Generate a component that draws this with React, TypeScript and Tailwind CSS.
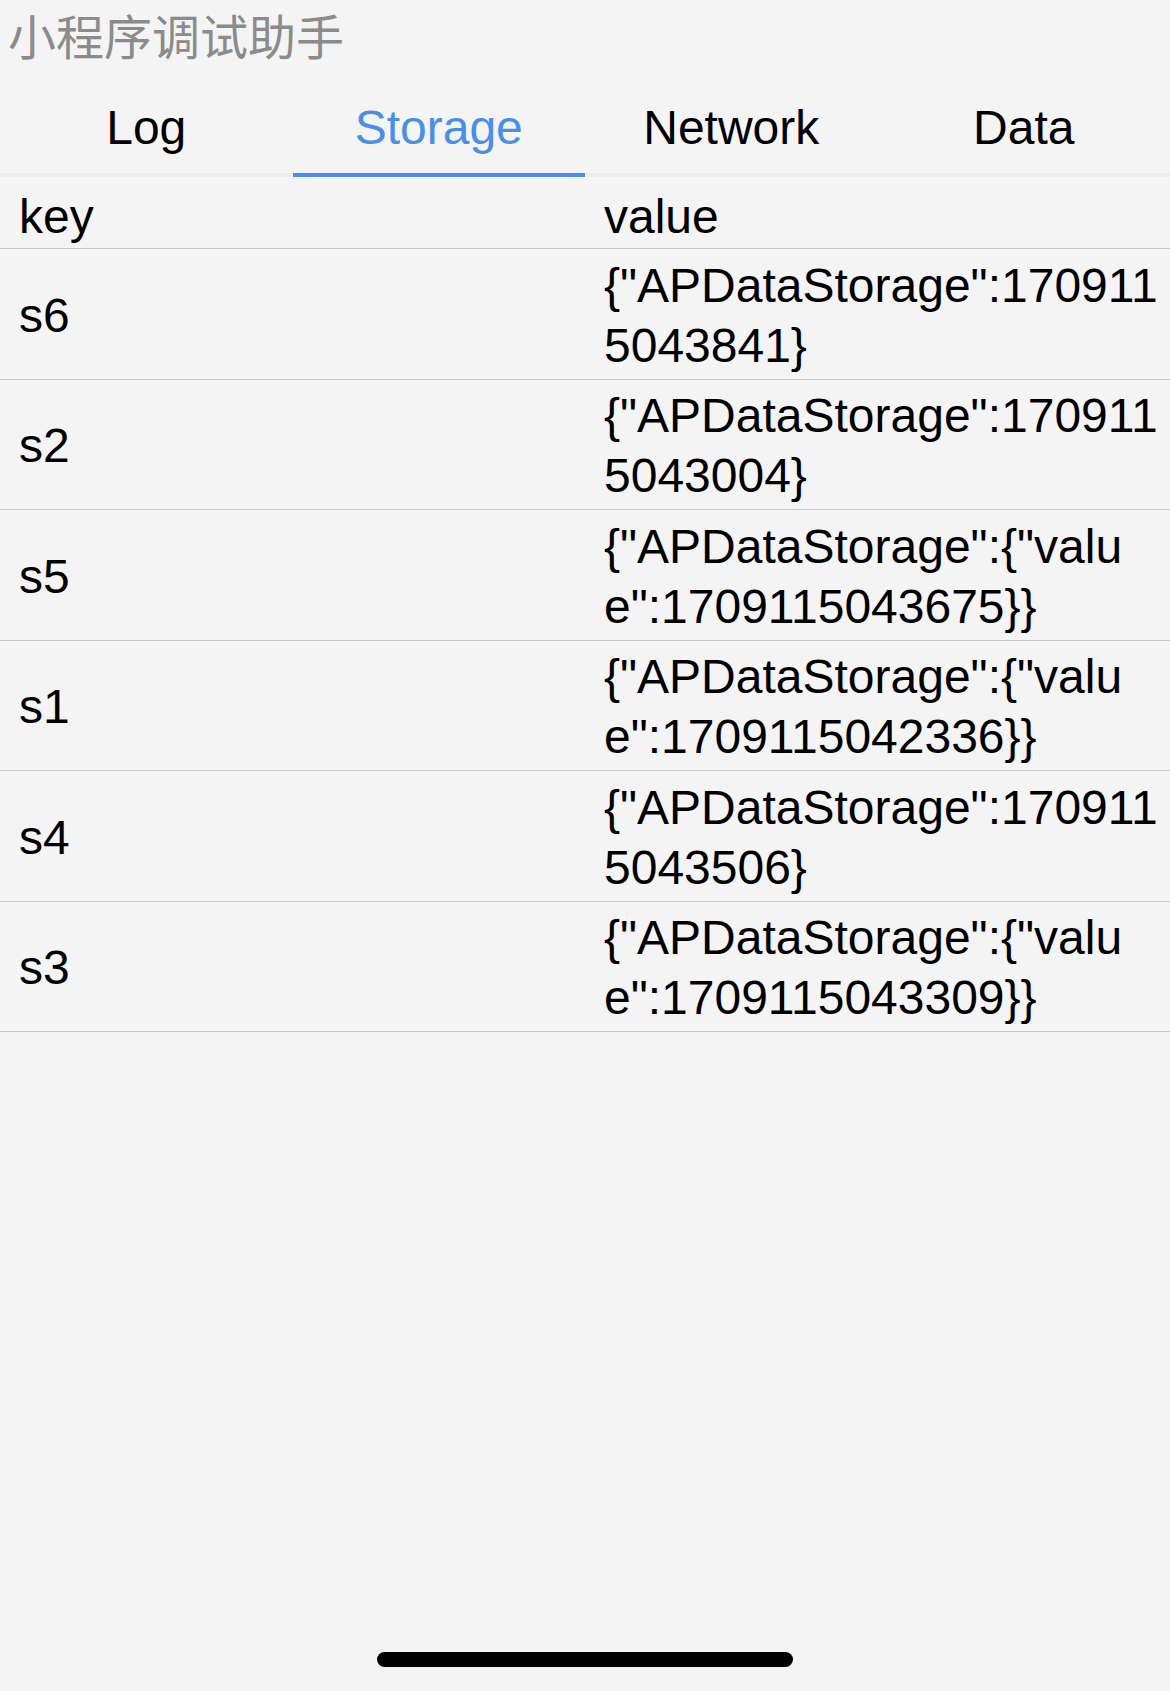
const tabs = ["Log", "Storage", "Network", "Data"];

type Row = {
  key: string;
  lines: string[];
};

const rows: Row[] = [
  { key: "s6", lines: ['{"APDataStorage":170911', "5043841}"] },
  { key: "s2", lines: ['{"APDataStorage":170911', "5043004}"] },
  { key: "s5", lines: ['{"APDataStorage":{"valu', 'e":1709115043675}}'] },
  { key: "s1", lines: ['{"APDataStorage":{"valu', 'e":1709115042336}}'] },
  { key: "s4", lines: ['{"APDataStorage":170911', "5043506}"] },
  { key: "s3", lines: ['{"APDataStorage":{"valu', 'e":1709115043309}}'] },
];

export default function App() {
  const active = "Storage";

  return (
    <div
      className="flex min-h-[1691px] w-[1170px] flex-col bg-[#f4f4f4] text-black"
      style={{ fontFamily: '"Liberation Sans", Arial, "Noto Sans CJK SC", sans-serif' }}
    >
      {/* Title */}
      <div
        className="h-[78px] pl-[8px] pt-[2px] text-[48px] leading-[64px] text-[#8b8b8b]"
        style={{ fontFamily: '"Noto Sans CJK SC", "Liberation Sans", sans-serif' }}
      >
        小程序调试助手
      </div>

      {/* Tabs */}
      <div className="grid grid-cols-4 border-b-[4px] border-[#ececec]">
        {tabs.map((tab) => (
          <div
            key={tab}
            className={
              tab === active
                ? "-mb-[4px] flex h-[99px] items-center justify-center border-b-[4px] border-[#4a8fe7] pt-[4px] text-[48px] text-[#4a8fe7]"
                : "flex h-[95px] items-center justify-center pt-[4px] text-[48px]"
            }
          >
            {tab}
          </div>
        ))}
      </div>

      {/* Table header */}
      <div className="grid h-[72px] grid-cols-2 items-center border-b-[1.5px] border-[#c9c9c9] pt-[4px] text-[48px]">
        <div className="pl-[19px]">key</div>
        <div className="pl-[19px]">value</div>
      </div>

      {/* Rows */}
      {rows.map((row) => (
        <div
          key={row.key}
          className="grid h-[130.5px] grid-cols-2 items-center border-b-[1.5px] border-[#c9c9c9] pt-[4px] text-[48px] leading-[60px]"
        >
          <div className="pl-[19px]">{row.key}</div>
          <div className="pl-[19px]">
            {row.lines.map((line, i) => (
              <div key={i} className="whitespace-nowrap">
                {line}
              </div>
            ))}
          </div>
        </div>
      ))}

      <div className="flex-1" />

      {/* Home indicator */}
      <div className="flex justify-center pb-[24px]">
        <div className="h-[15px] w-[416px] rounded-full bg-black" />
      </div>
    </div>
  );
}
